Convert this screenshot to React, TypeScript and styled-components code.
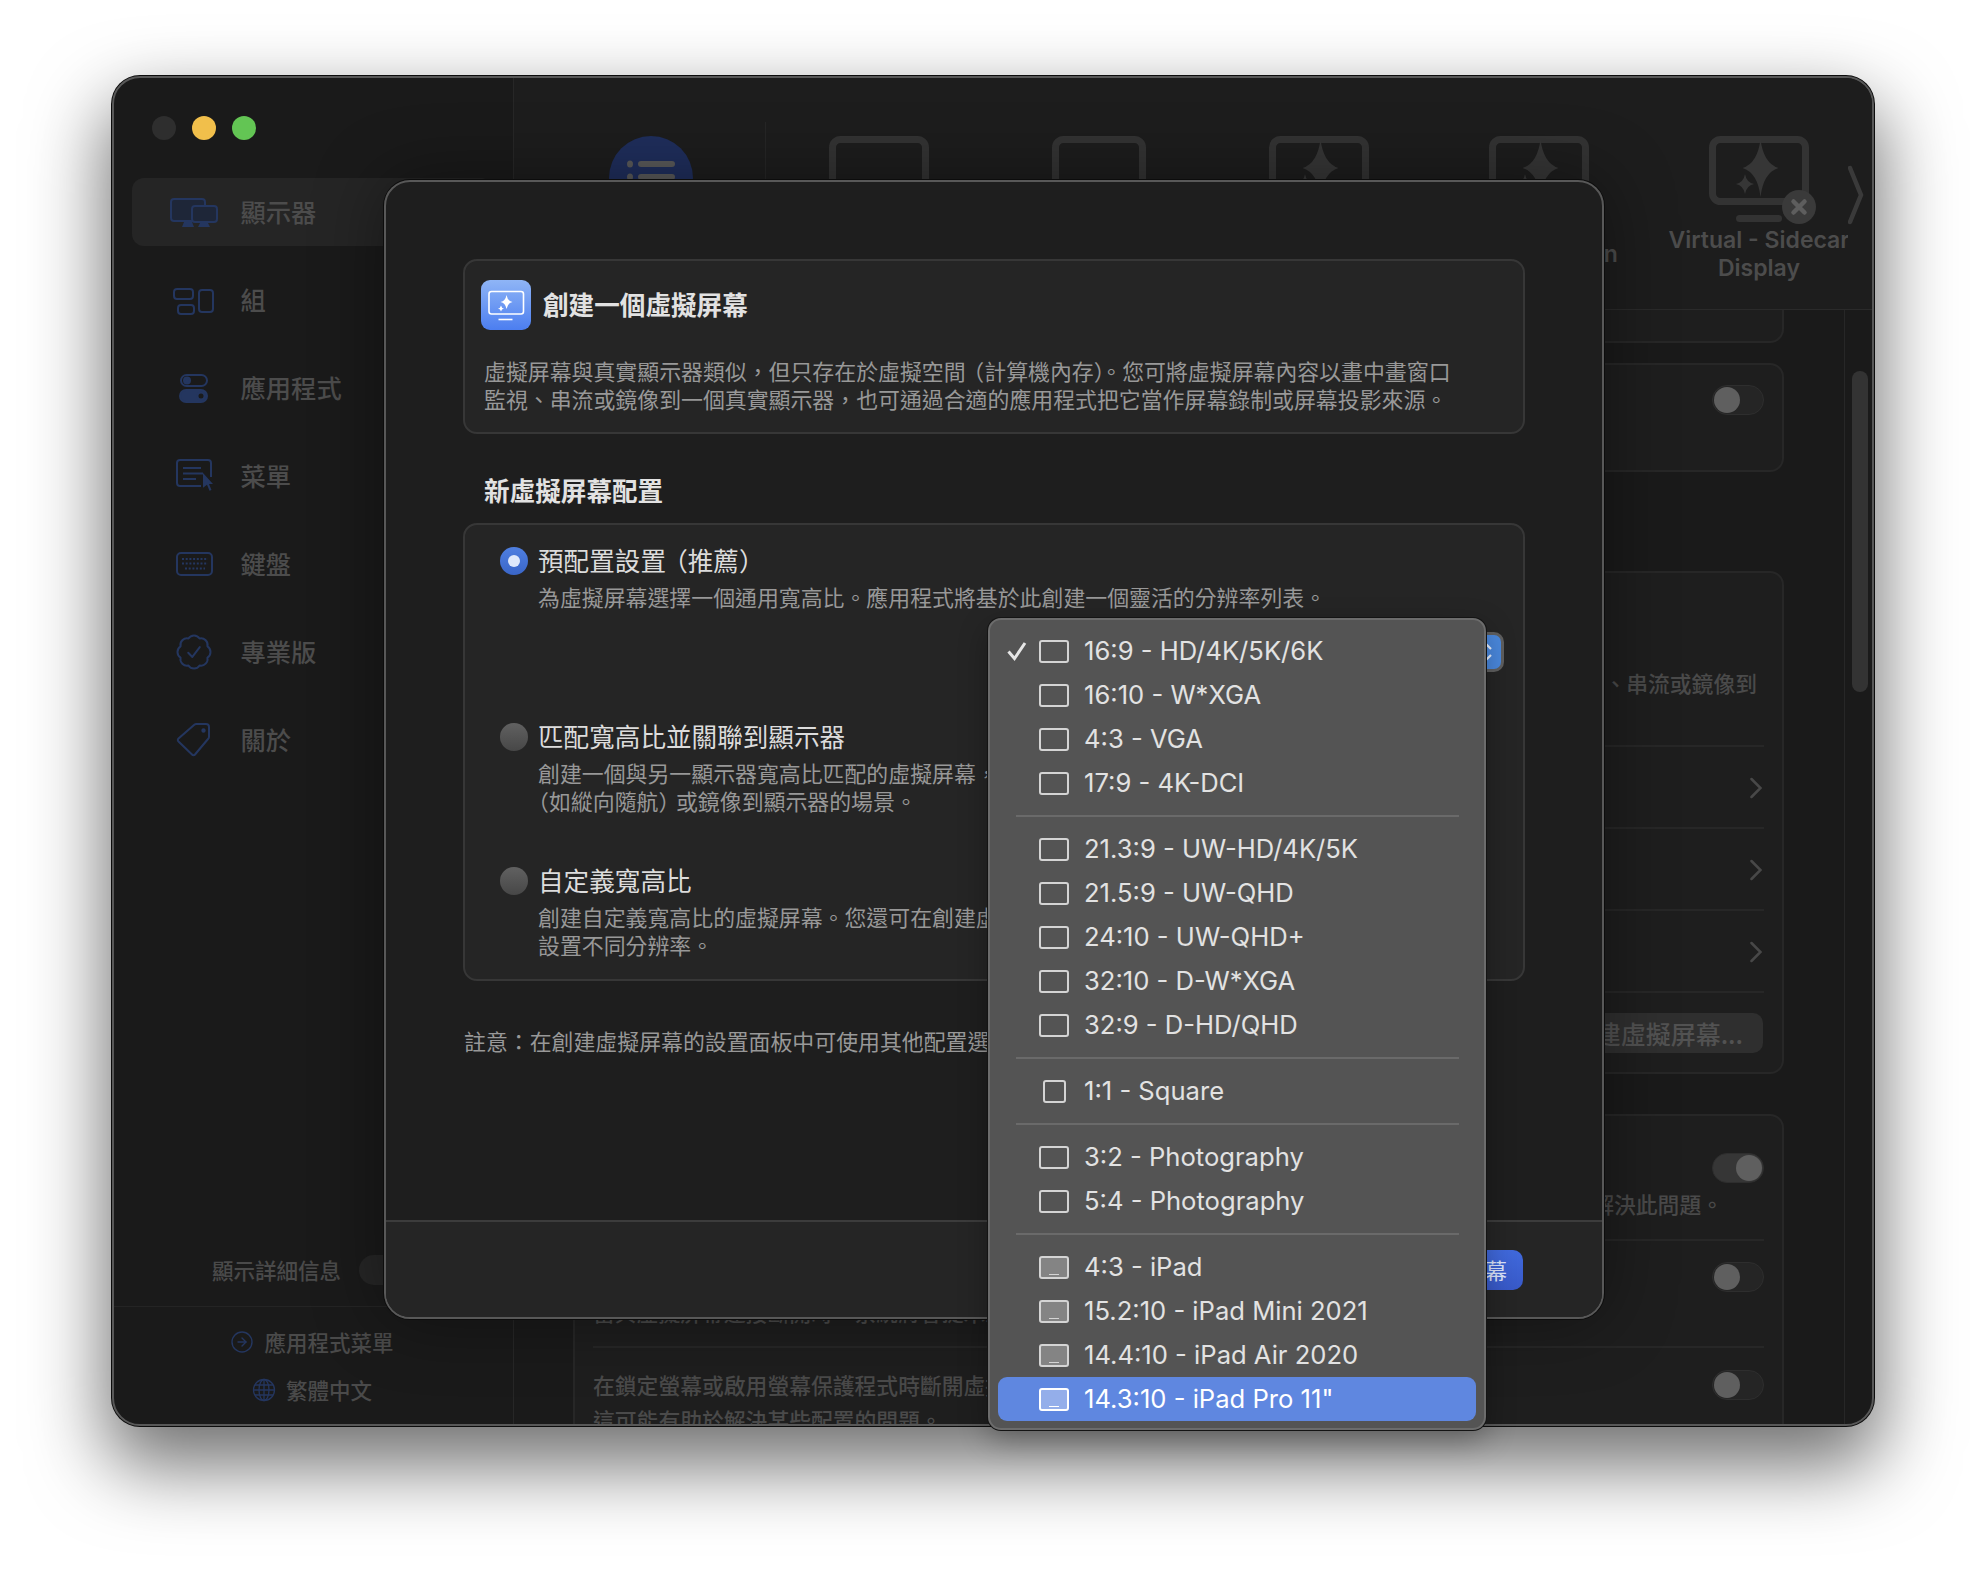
import * as React from 'react';
import styled, { createGlobalStyle } from 'styled-components';
import { CircleArrowRight } from 'lucide-react';

const GlobalStyle = createGlobalStyle`
   html, body {
      margin: 0;
      height: 100%;
      background: #fff;
   }
   body {
      overflow: hidden;
      font-family: 'Noto Sans CJK TC', 'Noto Sans', sans-serif;
   }
`;

const Page = styled.div`
   padding: 76px 0 0 112px;
`;

const Frame = styled.div`
   position: relative;
   width: 1762px;
   height: 1350px;
`;

const Window = styled.div`
   box-sizing: border-box;
   width: 100%;
   height: 100%;
   display: flex;
   overflow: hidden;
   background: #1a1a1a;
   border: 2px solid #585858;
   border-radius: 28px;
   box-shadow: 0 0 0 1px #0c0c0c, 0 34px 76px 6px rgba(0, 0, 0, 0.56);
`;

const Sidebar = styled.aside`
   box-sizing: border-box;
   width: 400px;
   flex: none;
   display: flex;
   flex-direction: column;
   border-right: 1px solid #272727;
`;

const Lights = styled.div`
   display: flex;
   gap: 16px;
   padding: 38px 0 0 38px;
`;

const Light = styled.span<{ $color: string }>`
   width: 24px;
   height: 24px;
   border-radius: 50%;
   background: ${(p) => p.$color};
`;

const Nav = styled.nav`
   display: flex;
   flex-direction: column;
   gap: 20px;
   margin: 38px 20px 0 18px;
`;

const NavRow = styled.div<{ $active?: boolean }>`
   box-sizing: border-box;
   height: 68px;
   display: flex;
   align-items: center;
   gap: 19.5px;
   padding: 0 0 2px 33px;
   border-radius: 12px;
   background: ${(p) => (p.$active ? '#252525' : 'transparent')};
   color: #4c4c4c;
   font-size: 25.3px;
   font-weight: 500;
   svg {
      flex: none;
      width: 56px;
      height: 56px;
      margin-top: 2px;
   }
`;

const SideBottom = styled.div`
   margin-top: auto;
`;

const DetailRow = styled.div`
   box-sizing: border-box;
   height: 30px;
   display: flex;
   align-items: center;
   gap: 18px;
   margin: 0 0 21px 98px;
   padding-bottom: 2px;
   color: #4a4a4a;
   font-size: 21.5px;
   font-weight: 500;
`;

const DetailSwitch = styled.span`
   width: 52px;
   height: 30px;
   flex: none;
   margin-top: 2px;
   border-radius: 15px;
   background: #262626;
`;

const SideLinks = styled.div`
   display: flex;
   flex-direction: column;
   align-items: center;
   gap: 18px;
   padding: 20px 3px 19px 0;
   border-top: 1px solid #242424;
`;

const SideLink = styled.div`
   box-sizing: border-box;
   height: 30px;
   display: flex;
   align-items: center;
   gap: 10px;
   padding-bottom: 2px;
   color: #4a4a4a;
   font-size: 21.5px;
   font-weight: 500;
   svg {
      flex: none;
      margin-top: 2px;
      color: #24365f;
   }
`;

const Main = styled.main`
   flex: 1;
   min-width: 0;
   display: flex;
   flex-direction: column;
`;

const Toolbar = styled.header`
   box-sizing: border-box;
   height: 232px;
   flex: none;
   display: flex;
   background: #1d1d1d;
   border-bottom: 1px solid #2a2a2a;
`;

const TabStrip = styled.div`
   flex: 1;
   min-width: 0;
   display: flex;
   padding-left: 27px;
   overflow: hidden;
`;

const Tab = styled.div`
   width: 220px;
   flex: none;
   display: flex;
   flex-direction: column;
   align-items: center;
   padding-top: 58px;
   svg {
      display: block;
      overflow: visible;
   }
`;

const TabDivider = styled.span`
   width: 1px;
   height: 190px;
   flex: none;
   margin: 44px 3px 0 4px;
   background: #262626;
`;

const TabLabel = styled.div`
   height: 56px;
   display: flex;
   align-items: center;
   color: #4c4c4c;
   font-family: Inter, sans-serif;
   font-size: 23px;
   font-weight: 600;
   line-height: 28px;
   text-align: center;
   white-space: nowrap;
`;

const TabMore = styled.div`
   width: 24px;
   flex: none;
   padding-top: 87px;
`;

const ContentRow = styled.div`
   flex: 1;
   min-height: 0;
   display: flex;
`;

const Content = styled.div`
   flex: 1;
   min-width: 0;
   padding: 0 60px 0 59px;
   overflow: hidden;
`;

const ScrollTrack = styled.div`
   box-sizing: border-box;
   width: 28px;
   flex: none;
   border-left: 1px solid #272727;
`;

const ScrollThumb = styled.div`
   width: 16px;
   height: 321px;
   margin: 61px 0 0 7px;
   border-radius: 8px;
   background: #333;
`;

const SettingsCard = styled.section<{ $gap: number; $open?: boolean }>`
   margin-top: ${(p) => p.$gap}px;
   background: #1e1e1e;
   border: 2px solid #272727;
   border-top-style: ${(p) => (p.$open ? 'none' : 'solid')};
   border-radius: ${(p) => (p.$open ? '0 0 14px 14px' : '14px')};
`;

const Stub = styled.div`
   height: 31px;
`;

const SwitchRow = styled.div<{ $height: number; $top: number }>`
   box-sizing: border-box;
   height: ${(p) => p.$height}px;
   display: flex;
   flex-direction: column;
   margin: 0 18px;
   padding-top: ${(p) => p.$top}px;
   border-bottom: 2px solid #272727;
   &:last-child {
      border-bottom: none;
   }
`;

const Switch = styled.span<{ $on?: boolean }>`
   box-sizing: border-box;
   width: 52px;
   height: 30px;
   flex: none;
   align-self: flex-end;
   display: flex;
   justify-content: ${(p) => (p.$on ? 'flex-end' : 'flex-start')};
   padding: 1px;
   border: 1px solid #2e2e2e;
   border-radius: 15px;
   background: ${(p) => (p.$on ? '#363636' : '#252525')};
   &::before {
      content: '';
      width: 26px;
      height: 26px;
      border-radius: 50%;
      background: #5f5f5f;
   }
`;

const LinkRow = styled.div`
   box-sizing: border-box;
   height: 82px;
   display: flex;
   align-items: center;
   justify-content: flex-end;
   margin: 0 18px;
   padding: 2px 2px 0 0;
   border-bottom: 2px solid #272727;
   color: #484848;
`;

const FadedLine = styled.div<{ $right?: number; $offset?: number }>`
   margin-top: ${(p) => p.$offset ?? 0}px;
   padding-right: ${(p) => p.$right ?? 0}px;
   color: #4a4a4a;
   font-size: 21.8px;
   font-weight: 500;
   line-height: 35px;
   white-space: nowrap;
   text-align: ${(p) => (p.$right !== undefined ? 'right' : 'left')};
`;

const ActionRow = styled.div`
   display: flex;
   justify-content: flex-end;
   padding: 20px 19px 19px;
`;

const GhostButton = styled.div`
   height: 40px;
   display: flex;
   align-items: center;
   padding: 0 20px 0 60px;
   border-radius: 10px;
   background: #2f2f2f;
   color: #525252;
   font-size: 25px;
   font-weight: 500;
   white-space: nowrap;
`;

const Modal = styled.div`
   position: absolute;
   left: 272px;
   top: 104px;
   box-sizing: border-box;
   width: 1220px;
   height: 1139px;
   display: flex;
   flex-direction: column;
   background: #1e1e1e;
   border: 2px solid #585858;
   border-radius: 26px;
   box-shadow: 0 0 0 1px #0c0c0c, 0 0 70px rgba(0, 0, 0, 0.4);
`;

const ModalBody = styled.div`
   flex: 1;
   padding: 77px 77px 0;
`;

const IntroCard = styled.section`
   padding: 19px 19px 19px;
   background: #252525;
   border: 2px solid #373737;
   border-radius: 14px;
`;

const IntroHead = styled.div`
   display: flex;
   align-items: center;
   gap: 12px;
   margin-left: -3px;
   svg {
      display: block;
      flex: none;
   }
`;

const IntroTitle = styled.h1`
   margin: 0;
   padding-bottom: 2px;
   color: #e2e2e2;
   font-size: 25.6px;
   font-weight: 700;
   line-height: 36px;
`;

const Body = styled.p`
   margin: 0;
   color: #989898;
   font-size: 21.9px;
   line-height: 28px;
   white-space: nowrap;
`;

const IntroBody = styled(Body)`
   margin-top: 27px;
`;

const SectionTitle = styled.h2`
   margin: 38px 0 15px 21px;
   color: #e2e2e2;
   font-size: 25.6px;
   font-weight: 700;
   line-height: 36px;
`;

const OptionsCard = styled.section`
   display: flex;
   flex-direction: column;
   padding: 17px 19px 20px 35px;
   background: #252525;
   border: 2px solid #373737;
   border-radius: 14px;
`;

const Option = styled.div<{ $gap?: number }>`
   display: grid;
   grid-template-columns: 28px 1fr;
   column-gap: 10px;
   row-gap: 5px;
   margin-top: ${(p) => p.$gap ?? 0}px;
`;

const Radio = styled.span<{ $checked?: boolean }>`
   width: 28px;
   height: 28px;
   margin-top: 5px;
   display: flex;
   align-items: center;
   justify-content: center;
   border-radius: 50%;
   background: ${(p) =>
      p.$checked ? 'linear-gradient(#4f7fe0, #3a66c8)' : 'linear-gradient(#616161, #474747)'};
   &::before {
      content: '';
      display: ${(p) => (p.$checked ? 'block' : 'none')};
      width: 12px;
      height: 12px;
      border-radius: 50%;
      background: #dfe9fb;
   }
`;

const OptionTitle = styled.div`
   color: #dcdcdc;
   font-size: 25.6px;
   line-height: 36px;
   white-space: nowrap;
`;

const OptionBody = styled(Body)`
   grid-column: 2;
`;

const Open = styled.span`
   margin-left: -0.15em;
`;

const LeadOpen = styled.span`
   margin-left: -0.5em;
`;

const Close = styled.span`
   margin-right: -0.2em;
`;

const SelectBox = styled.div`
   box-sizing: border-box;
   align-self: flex-end;
   width: 500px;
   height: 40px;
   margin-top: 21px;
   display: flex;
   justify-content: flex-end;
   padding: 3px;
   background: #5f5f5f;
   border-radius: 10px;
`;

const SelectCap = styled.span`
   width: 28px;
   display: flex;
   align-items: center;
   justify-content: center;
   background: #4a88dd;
   border-radius: 7px;
`;

const Note = styled(Body)`
   margin: 46px 0 0 1px;
`;

const ModalFooter = styled.footer`
   box-sizing: border-box;
   height: 97px;
   flex: none;
   display: flex;
   align-items: center;
   justify-content: flex-end;
   padding-right: 79px;
   background: #252525;
   border-top: 2px solid #3c3c3c;
   border-radius: 0 0 24px 24px;
`;

const PrimaryButton = styled.div`
   height: 40px;
   display: flex;
   align-items: center;
   padding: 0 16px;
   border-radius: 10px;
   background: linear-gradient(#4069dc, #3859c8);
   color: #dbe4fa;
   font-size: 21.8px;
   white-space: nowrap;
`;

const Menu = styled.div`
   position: absolute;
   left: 602px;
   top: 436px;
   box-sizing: border-box;
   width: 498px;
   padding: 9px 0 7px;
   background: #545454;
   border: 2px solid #6c6c6c;
   border-radius: 13px;
   box-shadow: 0 0 0 1px #141414, 0 10px 30px rgba(0, 0, 0, 0.3);
`;

const MenuRow = styled.div<{ $active?: boolean }>`
   box-sizing: border-box;
   height: 44px;
   display: flex;
   align-items: center;
   margin: 0 8px;
   padding: 0 0 2px 9px;
   border-radius: 9px;
   background: ${(p) => (p.$active ? '#5f87e0' : 'transparent')};
   color: ${(p) => (p.$active ? '#fff' : '#e2e2e2')};
   font-family: Inter, sans-serif;
   font-size: 25.6px;
   white-space: nowrap;
`;

const CheckCell = styled.span`
   width: 32px;
   flex: none;
   margin-top: 2px;
   display: flex;
   svg {
      display: block;
   }
`;

const IconCell = styled.span`
   width: 30px;
   flex: none;
   margin: 2px 15px 0 0;
   display: flex;
   justify-content: center;
`;

const AspectIcon = styled.span<{ $square?: boolean; $device?: boolean; $active?: boolean }>`
   position: relative;
   box-sizing: border-box;
   width: ${(p) => (p.$square ? 23 : 30)}px;
   height: 23px;
   border: 2px solid ${(p) => (p.$active ? '#fff' : '#d4d4d4')};
   border-radius: 3px;
   background: ${(p) => (p.$active ? '#94aeea' : p.$device ? '#848484' : 'transparent')};
   &::after {
      content: '';
      display: ${(p) => (p.$device ? 'block' : 'none')};
      position: absolute;
      left: 8px;
      right: 8px;
      bottom: 2px;
      height: 1px;
      background: ${(p) => (p.$active ? '#fff' : '#d4d4d4')};
   }
`;

const MenuSeparator = styled.div`
   height: 2px;
   margin: 10px 25px 10px 26px;
   background: #6a6a6a;
`;

type Shape = { label: string; square?: boolean; device?: boolean; checked?: boolean; active?: boolean };

const menuGroups: Shape[][] = [
   [
      { label: '16:9 - HD/4K/5K/6K', checked: true },
      { label: '16:10 - W*XGA' },
      { label: '4:3 - VGA' },
      { label: '17:9 - 4K-DCI' },
   ],
   [
      { label: '21.3:9 - UW-HD/4K/5K' },
      { label: '21.5:9 - UW-QHD' },
      { label: '24:10 - UW-QHD+' },
      { label: '32:10 - D-W*XGA' },
      { label: '32:9 - D-HD/QHD' },
   ],
   [{ label: '1:1 - Square', square: true }],
   [{ label: '3:2 - Photography' }, { label: '5:4 - Photography' }],
   [
      { label: '4:3 - iPad', device: true },
      { label: '15.2:10 - iPad Mini 2021', device: true },
      { label: '14.4:10 - iPad Air 2020', device: true },
      { label: '14.3:10 - iPad Pro 11"', device: true, active: true },
   ],
];

const NAVY = '#24365f';

function starPath(cx: number, cy: number, rx: number, ry: number) {
   const kx = rx * 0.16;
   const ky = ry * 0.16;
   return `M${cx} ${cy - ry}Q${cx + kx} ${cy - ky} ${cx + rx} ${cy}Q${cx + kx} ${cy + ky} ${cx} ${cy + ry}Q${cx - kx} ${cy + ky} ${cx - rx} ${cy}Q${cx - kx} ${cy - ky} ${cx} ${cy - ry}Z`;
}

function DisplaysIcon() {
   return (
      <svg viewBox="0 0 56 56" fill="none">
         <rect x="6" y="15" width="34" height="22" rx="3" fill="#1e2638" stroke={NAVY} strokeWidth="2" />
         <rect x="27" y="22" width="25" height="16" rx="3" fill="#1e2638" stroke={NAVY} strokeWidth="2" />
         <path d="M19 38h8l2 5H17zM35 39h8l2 4H33z" fill={NAVY} />
      </svg>
   );
}

function GroupIcon() {
   return (
      <svg viewBox="0 0 56 56" fill="none" stroke={NAVY} strokeWidth="2">
         <rect x="9" y="17" width="19" height="10" rx="3" />
         <rect x="13" y="33" width="16" height="9" rx="3" />
         <rect x="34" y="18" width="14" height="22" rx="3" />
      </svg>
   );
}

function AppsIcon() {
   return (
      <svg viewBox="0 0 56 56" fill="none" stroke={NAVY} strokeWidth="2">
         <rect x="16" y="15" width="26" height="11" rx="5.5" />
         <circle cx="22" cy="20.5" r="3" fill={NAVY} />
         <rect x="15" y="30" width="27" height="12" rx="6" fill={NAVY} />
         <circle cx="36" cy="36" r="3.5" fill="#1a1a1a" />
      </svg>
   );
}

function MenuIcon() {
   return (
      <svg viewBox="0 0 56 56" fill="none" stroke={NAVY} strokeWidth="2">
         <path d="M36 38H15a3 3 0 0 1-3-3V15a3 3 0 0 1 3-3h28a3 3 0 0 1 3 3v14" />
         <path d="M18 20h18M18 25.500h20M18 31h13" />
         <path d="M38 25l10 11h-4l2.500 6-2 .8-2.500-6-4 3z" fill={NAVY} stroke="none" />
      </svg>
   );
}

function KeyboardIcon() {
   return (
      <svg viewBox="0 0 56 56" fill="none" stroke={NAVY} strokeWidth="2">
         <rect x="12" y="17" width="35" height="22" rx="4" />
         <path d="M17 23h26M17 27.500h26" strokeDasharray="2 1.700" />
         <path d="M20 32.500h20" strokeDasharray="2 1.700" />
      </svg>
   );
}

function TagIcon() {
   return (
      <svg viewBox="0 0 56 56" fill="none" stroke={NAVY} strokeWidth="2" strokeLinejoin="round">
         <path d="M13.500 26.500 29 13a3 3 0 0 1 2-1h10a3 3 0 0 1 3 3v10a3 3 0 0 1-1 2L30 42.500a2 2 0 0 1-3 0L13.500 29.500a2 2 0 0 1 0-3z" />
         <circle cx="38.500" cy="18.500" r="1.200" fill={NAVY} />
      </svg>
   );
}

function BadgeIcon() {
   return (
      <svg viewBox="0 0 56 56" fill="none" stroke={NAVY} strokeLinecap="round" strokeLinejoin="round">
         <g transform="translate(9.200 8.200) scale(1.650)" strokeWidth="1.200">
            <path d="M3.850 8.620a4 4 0 0 1 4.780-4.770 4 4 0 0 1 6.740 0 4 4 0 0 1 4.780 4.780 4 4 0 0 1 0 6.740 4 4 0 0 1-4.770 4.780 4 4 0 0 1-6.750 0 4 4 0 0 1-4.780-4.770 4 4 0 0 1 0-6.760Z" />
            <path d="m8.500 12.500 2.500 2.500 4.500-6" />
         </g>
      </svg>
   );
}

function GlobeIcon() {
   return (
      <svg width="24" height="24" viewBox="0 0 24 24" fill="none" stroke={NAVY} strokeWidth="1.300">
         <circle cx="12" cy="12" r="10.500" />
         <ellipse cx="12" cy="12" rx="5" ry="10.500" />
         <path d="M12 1.500v21M1.500 12h21M3 7h18M3 17h18" />
      </svg>
   );
}

function CircleTab() {
   return (
      <svg width="84" height="90" viewBox="0 0 84 90">
         <circle cx="42" cy="42" r="42" fill="#1f2e5c" />
         <ellipse cx="21" cy="28" rx="3" ry="3.500" fill="#5a5a5a" />
         <rect x="29" y="25" width="37" height="6" rx="3" fill="#5a5a5a" />
         <ellipse cx="21" cy="41" rx="3" ry="3.500" fill="#5a5a5a" />
         <rect x="29" y="38" width="37" height="6" rx="3" fill="#5a5a5a" />
      </svg>
   );
}

function MonitorTab({ width = 100, star, remove }: { width?: number; star?: boolean; remove?: boolean }) {
   return (
      <svg width={width} height="90" viewBox={`0 0 ${width} 90`} fill="none">
         <rect x="3.500" y="3.500" width={width - 7} height="62" rx="8" stroke="#333" strokeWidth="7" />
         <rect x={width / 2 - 23} y="79" width="46" height="7" rx="3.500" fill="#333" />
         {star && <path d={starPath(51.500, 32, 18, 29)} fill="#363636" />}
         {star && <path d={starPath(36, 48, 9, 10)} fill="#363636" />}
         {remove && (
            <g>
               <circle cx="90" cy="71" r="17" fill="#3a3a3a" />
               <path d="M84.500 65.500l11 11M95.500 65.500l-11 11" stroke="#5e5e5e" strokeWidth="4.500" strokeLinecap="round" />
            </g>
         )}
      </svg>
   );
}

function Chevron() {
   return (
      <svg width="12" height="22" viewBox="0 0 12 22" fill="none" stroke="#484848" strokeWidth="2.500" strokeLinecap="round">
         <path d="M1.500 2l9 9-9 9" />
      </svg>
   );
}

function IntroIcon() {
   return (
      <svg width="50" height="50" viewBox="0 0 50 50" fill="none">
         <defs>
            <linearGradient id="intro" x1="0" y1="0" x2="0" y2="1">
               <stop offset="0" stopColor="#8fb5f6" />
               <stop offset="1" stopColor="#4c7ef0" />
            </linearGradient>
         </defs>
         <rect width="50" height="50" rx="9" fill="url(#intro)" />
         <rect x="8" y="11.500" width="34.500" height="22.500" rx="2.500" stroke="#fff" strokeWidth="1.600" />
         <path d="M17.500 39.500h14" stroke="#fff" strokeWidth="1.600" />
         <path d={starPath(25.500, 22, 6, 7)} fill="#fff" />
         <path d={starPath(20, 28.500, 3, 3)} fill="#fff" />
      </svg>
   );
}

export default function App() {
   return (
      <Page>
         <GlobalStyle />
         <Frame>
            <Window>
               <Sidebar>
                  <Lights>
                     <Light $color="#2e2e2e" />
                     <Light $color="#f1bf4b" />
                     <Light $color="#63c554" />
                  </Lights>
                  <Nav>
                     <NavRow $active><DisplaysIcon />顯示器</NavRow>
                     <NavRow><GroupIcon />組</NavRow>
                     <NavRow><AppsIcon />應用程式</NavRow>
                     <NavRow><MenuIcon />菜單</NavRow>
                     <NavRow><KeyboardIcon />鍵盤</NavRow>
                     <NavRow><BadgeIcon />專業版</NavRow>
                     <NavRow><TagIcon />關於</NavRow>
                  </Nav>
                  <SideBottom>
                     <DetailRow>
                        顯示詳細信息
                        <DetailSwitch />
                     </DetailRow>
                     <SideLinks>
                        <SideLink><CircleArrowRight size={24} strokeWidth={1.4} />應用程式菜單</SideLink>
                        <SideLink><GlobeIcon />繁體中文</SideLink>
                     </SideLinks>
                  </SideBottom>
               </Sidebar>
               <Main>
                  <Toolbar>
                     <TabStrip>
                        <Tab><CircleTab /></Tab>
                        <TabDivider />
                        <Tab><MonitorTab /></Tab>
                        <Tab><MonitorTab width={94} /></Tab>
                        <Tab><MonitorTab star /></Tab>
                        <Tab>
                           <MonitorTab star />
                           <TabLabel>Virtual Screen</TabLabel>
                        </Tab>
                        <Tab>
                           <MonitorTab star remove />
                           <TabLabel>Virtual - Sidecar<br />Display</TabLabel>
                        </Tab>
                     </TabStrip>
                     <TabMore>
                        <svg width="16" height="60" viewBox="0 0 16 60" fill="none" stroke="#3a3a3a" strokeWidth="4.500" strokeLinecap="round">
                           <path d="M2 3l11 27L2 57" />
                        </svg>
                     </TabMore>
                  </Toolbar>
                  <ContentRow>
                     <Content>
                        <SettingsCard $gap={0} $open><Stub /></SettingsCard>
                        <SettingsCard $gap={20}>
                           <SwitchRow $height={105} $top={20}><Switch /></SwitchRow>
                        </SettingsCard>
                        <SettingsCard $gap={99}>
                           <SwitchRow $height={174} $top={92}>
                              <FadedLine $right={7}>您可將虛擬屏幕內容以畫中畫窗口監視、串流或鏡像到</FadedLine>
                           </SwitchRow>
                           <LinkRow><Chevron /></LinkRow>
                           <LinkRow><Chevron /></LinkRow>
                           <LinkRow><Chevron /></LinkRow>
                           <ActionRow><GhostButton>創建虛擬屏幕...</GhostButton></ActionRow>
                        </SettingsCard>
                        <SettingsCard $gap={40}>
                           <SwitchRow $height={125} $top={37}>
                              <Switch $on />
                              <FadedLine $right={41} $offset={3}>這可能有助於解決此問題。</FadedLine>
                           </SwitchRow>
                           <SwitchRow $height={107} $top={21}>
                              <Switch />
                              <FadedLine $offset={2}>當與虛擬屏幕連接斷開時，系統將會提示您重新連接。</FadedLine>
                           </SwitchRow>
                           <SwitchRow $height={120} $top={22}>
                              <Switch />
                              <FadedLine $offset={-33}>在鎖定螢幕或啟用螢幕保護程式時斷開虛擬屏幕連接。</FadedLine>
                              <FadedLine>這可能有助於解決某些配置的問題。</FadedLine>
                           </SwitchRow>
                        </SettingsCard>
                     </Content>
                     <ScrollTrack><ScrollThumb /></ScrollTrack>
                  </ContentRow>
               </Main>
            </Window>
            <Modal>
               <ModalBody>
                  <IntroCard>
                     <IntroHead>
                        <IntroIcon />
                        <IntroTitle>創建一個虛擬屏幕</IntroTitle>
                     </IntroHead>
                     <IntroBody>
                        虛擬屏幕與真實顯示器類似，但只存在於虛擬空間<Open>（</Open>計算機內存<Close>）</Close>。您可將虛擬屏幕內容以畫中畫窗口
                        <br />
                        監視、串流或鏡像到一個真實顯示器，也可通過合適的應用程式把它當作屏幕錄制或屏幕投影來源。
                     </IntroBody>
                  </IntroCard>
                  <SectionTitle>新虛擬屏幕配置</SectionTitle>
                  <OptionsCard>
                     <Option>
                        <Radio $checked />
                        <OptionTitle>預配置設置<Open>（</Open>推薦<Close>）</Close></OptionTitle>
                        <OptionBody>為虛擬屏幕選擇一個通用寬高比。應用程式將基於此創建一個靈活的分辨率列表。</OptionBody>
                     </Option>
                     <SelectBox>
                        <SelectCap>
                           <svg width="12" height="22" viewBox="0 0 12 22" fill="none" stroke="#eaf2ff" strokeWidth="2.200">
                              <path d="M2 8l4-4 4 4M2 14l4 4 4-4" />
                           </svg>
                        </SelectCap>
                     </SelectBox>
                     <Option $gap={46}>
                        <Radio />
                        <OptionTitle>匹配寬高比並關聯到顯示器</OptionTitle>
                        <OptionBody>
                           創建一個與另一顯示器寬高比匹配的虛擬屏幕，
                           <br />
                           <LeadOpen>（</LeadOpen>如縱向隨航<Close>）</Close>或鏡像到顯示器的場景。
                        </OptionBody>
                     </Option>
                     <Option $gap={47}>
                        <Radio />
                        <OptionTitle>自定義寬高比</OptionTitle>
                        <OptionBody>
                           創建自定義寬高比的虛擬屏幕。您還可在創建虛擬屏幕後
                           <br />
                           設置不同分辨率。
                        </OptionBody>
                     </Option>
                  </OptionsCard>
                  <Note>註意：在創建虛擬屏幕的設置面板中可使用其他配置選項。</Note>
               </ModalBody>
               <ModalFooter>
                  <PrimaryButton>創建虛擬屏幕</PrimaryButton>
               </ModalFooter>
               <Menu>
                  {menuGroups.map((group, i) => (
                     <React.Fragment key={group[0].label}>
                        {i > 0 && <MenuSeparator />}
                        {group.map((item) => (
                           <MenuRow key={item.label} $active={item.active}>
                              <CheckCell>
                                 {item.checked && (
                                    <svg width="20" height="20" viewBox="0 0 20 20" fill="none" stroke="#e6e6e6" strokeWidth="3">
                                       <path d="M1.500 10.500l6 7L18 2" />
                                    </svg>
                                 )}
                              </CheckCell>
                              <IconCell>
                                 <AspectIcon $square={item.square} $device={item.device} $active={item.active} />
                              </IconCell>
                              {item.label}
                           </MenuRow>
                        ))}
                     </React.Fragment>
                  ))}
               </Menu>
            </Modal>
         </Frame>
      </Page>
   );
}
